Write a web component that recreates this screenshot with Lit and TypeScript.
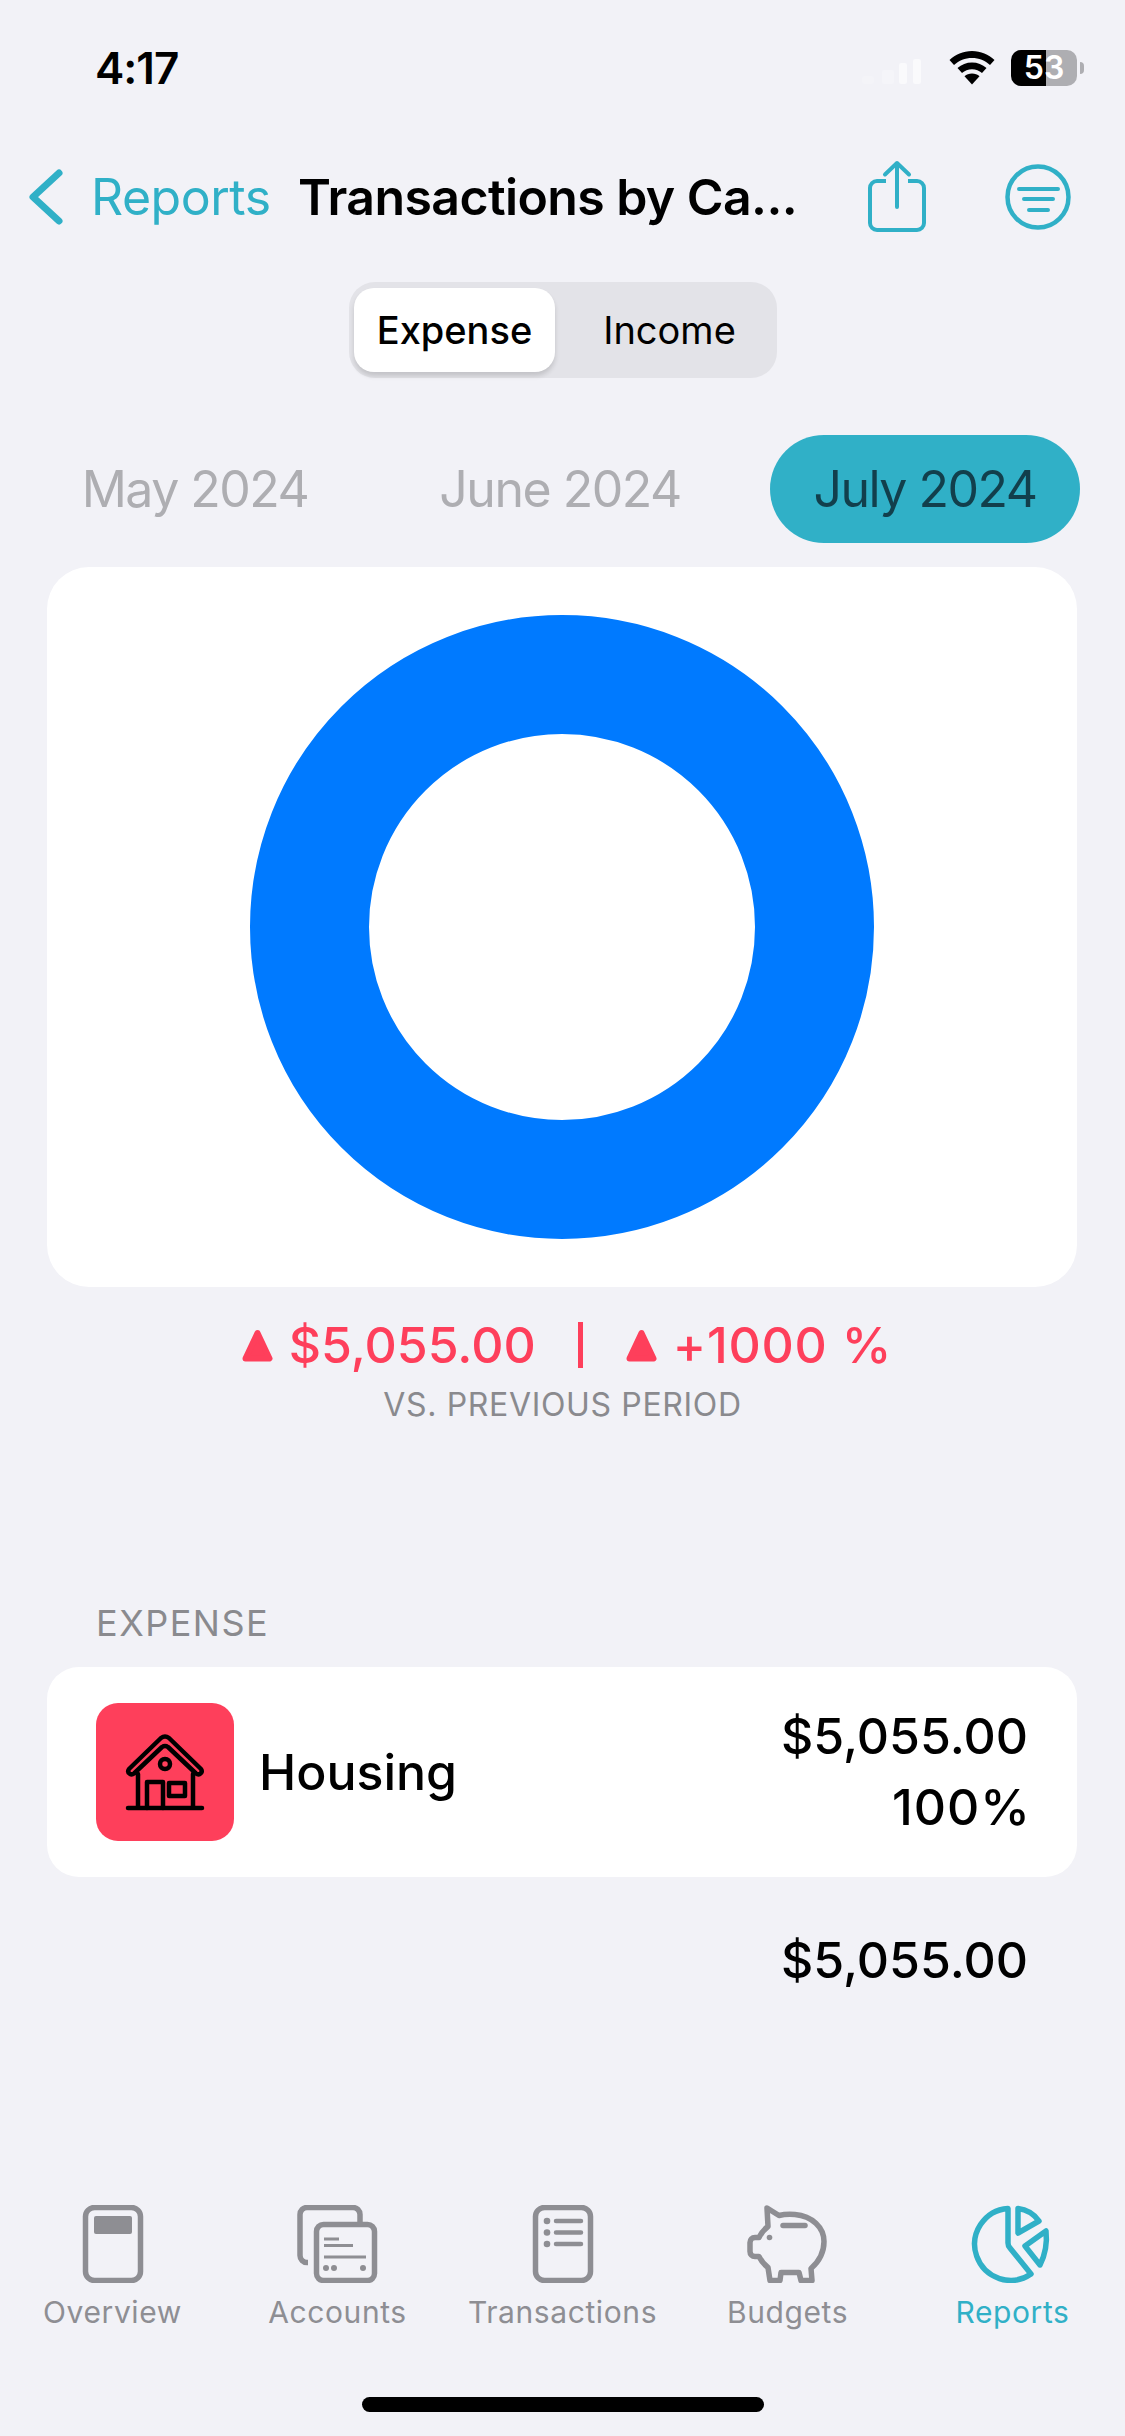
import { LitElement, html, css, svg } from "lit";
import { customElement } from "lit/decorators.js";

const tabs = [
  {
    label: "Overview",
    icon: svg`<rect x="22.500" y="2.500" width="55" height="73" rx="9" fill="none" stroke="currentColor" stroke-width="5.500"/>
      <rect x="31" y="11" width="38" height="18" rx="2" fill="currentColor"/>`,
  },
  {
    label: "Accounts",
    icon: svg`<path d="M20 57.500h-1a7 7 0 0 1-7-7V9.500a7 7 0 0 1 7-7h46a7 7 0 0 1 7 7v8" fill="none" stroke="currentColor" stroke-width="5.500"/>
      <rect x="28.500" y="19.500" width="58" height="56" rx="7" fill="none" stroke="currentColor" stroke-width="5.500"/>
      <path d="M36 34h15M36 40.500h29M36 52h42" stroke="currentColor" stroke-width="3" fill="none"/>
      <circle cx="38" cy="63" r="3" fill="currentColor"/><circle cx="46" cy="63" r="3" fill="currentColor"/><circle cx="75" cy="63" r="3" fill="currentColor"/>`,
  },
  {
    label: "Transactions",
    icon: svg`<rect x="22.500" y="2.500" width="55" height="73" rx="9" fill="none" stroke="currentColor" stroke-width="5.500"/>
      <circle cx="34" cy="16" r="3.300" fill="currentColor"/><circle cx="34" cy="27.500" r="3.300" fill="currentColor"/><circle cx="34" cy="39" r="3.300" fill="currentColor"/>
      <path d="M43 16h25M43 27.500h25M43 39h25" stroke="currentColor" stroke-width="4.500" stroke-linecap="round" fill="none"/>`,
  },
  {
    label: "Budgets",
    icon: svg`<path d="M29 3l12 7.500c4-1 10-1.500 16-1 17 1.500 29 13 29 27 0 11-5 20-13 27l1 12H63l-2-8H43l-1 8H32l-2-13c-4-3-7-7-9-11h-4c-3 0-5-2-5-5v-9c0-3 2-5 5-5h4c2-4 5-8 9-11z" fill="none" stroke="currentColor" stroke-width="5.500" stroke-linejoin="round"/>
      <path d="M45 20.500h22" stroke="currentColor" stroke-width="5.500" stroke-linecap="round"/>
      <circle cx="31.500" cy="32.500" r="2.800" fill="currentColor"/>`,
  },
  {
    label: "Reports",
    active: true,
    icon: svg`<path d="M45 3.400V38q0 3 2 5l21 26A36 36 0 1 1 45 3.400z" fill="none" stroke="currentColor" stroke-width="5.500" stroke-linejoin="round"/>
      <path d="M55 3.500Q68 5 76 16L55 28z" fill="none" stroke="currentColor" stroke-width="5.500" stroke-linejoin="round"/>
      <path d="M83 26q2 18-6 34L62 41z" fill="none" stroke="currentColor" stroke-width="5.500" stroke-linejoin="round"/>`,
  },
];

@customElement("app-root")
export class AppRoot extends LitElement {
  static styles = css`
    :host {
      display: flex;
      flex-direction: column;
      width: 1125px;
      height: 2436px;
      background: #f2f2f7;
      font-family: Inter, "Noto Sans", sans-serif;
      color: #000;
      overflow: hidden;
    }
    .status {
      height: 136px;
      flex: none;
      display: flex;
      align-items: center;
      justify-content: space-between;
      box-sizing: border-box;
      padding: 0 41px 0 95px;
    }
    .time {
      font-size: 44px;
      font-weight: 600;
      letter-spacing: -1px;
    }
    .status-right {
      display: flex;
      align-items: center;
    }
    .status-right svg {
      display: block;
    }
    .wifi {
      margin-left: -13px;
    }
    .battery {
      width: 66px;
      height: 36px;
      margin-left: 16px;
      border-radius: 10px;
      background: linear-gradient(90deg, #000 53%, #aeaeb2 53%);
      color: #fff;
      font-size: 32px;
      font-weight: 600;
      line-height: 36px;
      text-align: center;
    }
    .nub {
      width: 4px;
      height: 12px;
      margin-left: 3px;
      border-radius: 0 4px 4px 0;
      background: #aeaeb2;
    }
    .nav {
      height: 122px;
      flex: none;
      display: flex;
      align-items: center;
      box-sizing: border-box;
      padding-left: 26px;
    }
    .nav svg {
      display: block;
      flex: none;
    }
    .back {
      margin-left: 25px;
      width: 179px;
      font-size: 50px;
      color: #30b0c7;
      letter-spacing: -0.5px;
      white-space: nowrap;
    }
    .title {
      margin-left: 28px;
      width: 520px;
      font-size: 50px;
      font-weight: 600;
      letter-spacing: -0.6px;
      white-space: nowrap;
    }
    .share {
      margin-left: 49px;
    }
    .filter {
      margin-left: 78px;
    }
    .segment {
      flex: none;
      align-self: center;
      width: 428px;
      height: 96px;
      margin-top: 24px;
      margin-left: 1px;
      box-sizing: border-box;
      padding: 6px 5px;
      display: flex;
      background: #e3e3e8;
      border-radius: 26px;
      font-size: 38px;
    }
    .segment div {
      display: flex;
      align-items: center;
      justify-content: center;
    }
    .segment .on {
      width: 201px;
      background: #fff;
      border-radius: 20px;
      box-shadow: 0 4px 5px rgba(0, 0, 0, 0.14);
      font-weight: 500;
    }
    .segment .off {
      flex: 1;
      padding-left: 12px;
      font-weight: 400;
    }
    .months {
      flex: none;
      display: flex;
      gap: 55px;
      margin-top: 57px;
      padding-left: 40px;
    }
    .month {
      width: 310px;
      height: 108px;
      display: flex;
      align-items: center;
      justify-content: center;
      border-radius: 54px;
      font-size: 50px;
      color: #aeaeb2;
      letter-spacing: -1.5px;
    }
    .month.on {
      background: #30b0c7;
      color: #123f4c;
    }
    .chart {
      flex: none;
      width: 1030px;
      height: 720px;
      margin: 24px 0 0 47px;
      background: #fff;
      border-radius: 42px;
      display: flex;
      align-items: center;
      justify-content: center;
    }
    .chart svg {
      display: block;
    }
    .delta {
      flex: none;
      margin-top: 32px;
      height: 52px;
      padding-left: 8px;
      display: flex;
      align-items: center;
      justify-content: center;
      color: #fe3f5b;
      font-size: 50px;
      font-weight: 550;
      white-space: nowrap;
    }
    .delta svg {
      display: block;
      margin-right: 15px;
    }
    .sep {
      width: 5px;
      height: 46px;
      margin: 0 42px;
      background: #fe3f5b;
    }
    .pct {
      letter-spacing: 0.8px;
    }
    .vs {
      flex: none;
      margin-top: 14px;
      text-align: center;
      font-size: 32px;
      line-height: 40px;
      letter-spacing: 0.65px;
      color: #8a8a8e;
    }
    .section {
      flex: none;
      margin: 176px 0 0 96px;
      font-size: 36px;
      line-height: 44px;
      letter-spacing: 1.5px;
      color: #8a8a8e;
    }
    .row {
      flex: none;
      width: 1030px;
      height: 210px;
      margin: 22px 0 0 47px;
      box-sizing: border-box;
      padding: 0 49px;
      background: #fff;
      border-radius: 32px;
      display: flex;
      align-items: center;
    }
    .tile {
      width: 138px;
      height: 138px;
      border-radius: 22px;
      background: #fe3f5b;
      display: flex;
      align-items: center;
      justify-content: center;
      flex: none;
    }
    .name {
      margin-left: 25px;
      flex: 1;
      font-size: 50px;
      font-weight: 550;
    }
    .amounts {
      text-align: right;
      font-size: 50px;
      font-weight: 550;
      line-height: 71px;
    }
    .share-pct {
      letter-spacing: 1px;
      margin-right: -3px;
    }
    .total {
      flex: none;
      margin: 48px 97px 0 0;
      text-align: right;
      font-size: 50px;
      font-weight: 550;
      line-height: 70px;
    }
    .tabs {
      flex: none;
      margin-top: auto;
      display: grid;
      grid-template-columns: repeat(5, 225px);
    }
    .tab {
      display: flex;
      flex-direction: column;
      align-items: center;
      color: #8e8e93;
      font-size: 30px;
      letter-spacing: 0.6px;
      line-height: 40px;
    }
    .tab.on {
      color: #30b0c7;
    }
    .tab svg {
      display: block;
      margin-bottom: 9px;
    }
    .home {
      flex: none;
      align-self: center;
      width: 402px;
      height: 15px;
      margin: 65px 0 24px;
      border-radius: 8px;
      background: #000;
    }
  `;

  triangle() {
    return html`<svg width="33" height="33" viewBox="0 0 33 33">
      <path d="M16.500 4L28.500 29.500H4.500z" fill="currentColor" stroke="currentColor" stroke-width="6" stroke-linejoin="round"/>
    </svg>`;
  }

  render() {
    return html`
      <div class="status">
        <div class="time">4:17</div>
        <div class="status-right">
          <svg width="100" height="36" viewBox="0 0 100 36">
            <rect x="0" y="26" width="12" height="8" rx="2" fill="#f4f4f8"/>
            <rect x="20" y="20" width="12" height="14" rx="2" fill="#f5f5f9"/>
            <rect x="37" y="13" width="8" height="21" rx="2" fill="#fafafc"/>
            <rect x="51" y="9" width="8" height="25" rx="2" fill="#fafafc"/>
          </svg>
          <svg class="wifi" width="46" height="34" viewBox="0 0 46 34">
            <path d="M23 0C14 0 6.500 3.500 0.500 9l4.500 5C10 9.500 16 7 23 7s13 2.500 18 7l4.500-5C39.500 3.500 32 0 23 0z" fill="#000"/>
            <path d="M23 11.500c-5.500 0-10.500 2-14.500 5.500l4.500 5c2.700-2.300 6.200-3.700 10-3.700s7.300 1.400 10 3.700l4.500-5c-4-3.500-9-5.500-14.500-5.500z" fill="#000"/>
            <path d="M23 22.500c-3 0-5.500 1-7.500 2.800L23 33.500l7.500-8.200c-2-1.800-4.500-2.800-7.500-2.800z" fill="#000"/>
          </svg>
          <div class="battery">53</div>
          <div class="nub"></div>
        </div>
      </div>

      <div class="nav">
        <svg width="40" height="62" viewBox="0 0 40 62">
          <path d="M33 7L7 31l26 24" fill="none" stroke="#30b0c7" stroke-width="7" stroke-linecap="round" stroke-linejoin="round"/>
        </svg>
        <div class="back">Reports</div>
        <div class="title">Transactions by Ca...</div>
        <svg class="share" width="60" height="74" viewBox="0 0 60 74">
          <path d="M19 21H10a7 7 0 0 0-7 7v35a7 7 0 0 0 7 7h40a7 7 0 0 0 7-7V28a7 7 0 0 0-7-7h-9" fill="none" stroke="#30b0c7" stroke-width="4"/>
          <path d="M30 47V3M18 14.500L30 3l12 11.500" fill="none" stroke="#30b0c7" stroke-width="4" stroke-linecap="round" stroke-linejoin="round"/>
        </svg>
        <svg class="filter" width="66" height="66" viewBox="0 0 66 66">
          <circle cx="33" cy="33" r="30.500" fill="none" stroke="#30b0c7" stroke-width="4.500"/>
          <path d="M14 25h39M19 35h29M24 46h19" fill="none" stroke="#30b0c7" stroke-width="4" stroke-linecap="round"/>
        </svg>
      </div>

      <div class="segment">
        <div class="on">Expense</div>
        <div class="off">Income</div>
      </div>

      <div class="months">
        <div class="month">May 2024</div>
        <div class="month">June 2024</div>
        <div class="month on">July 2024</div>
      </div>

      <div class="chart">
        <svg width="626" height="626" viewBox="0 0 626 626">
          <circle cx="313" cy="313" r="252.500" fill="none" stroke="#007aff" stroke-width="119"/>
        </svg>
      </div>

      <div class="delta">
        ${this.triangle()}<span>$5,055.00</span><span class="sep"></span>${this.triangle()}<span class="pct">+1000 %</span>
      </div>
      <div class="vs">VS. PREVIOUS PERIOD</div>

      <div class="section">EXPENSE</div>
      <div class="row">
        <div class="tile">
          <svg width="80" height="80" viewBox="0 0 80 80" fill="none" stroke="#000" stroke-width="4.500" stroke-linecap="round" stroke-linejoin="round">
            <path d="M4 37L36 6q4-3 8 0l32 31q2 3-1 5-2 1-4-.5L43 15q-3-2-6 0L9 41.500q-2 1.500-4 .5-3-2-1-5z"/>
            <path d="M13 42v34M68 42v34M3 76h74"/>
            <circle cx="40" cy="32" r="5"/>
            <path d="M22 76V50h16v26M44 51h16v13H44z"/>
          </svg>
        </div>
        <div class="name">Housing</div>
        <div class="amounts">$5,055.00<div class="share-pct">100%</div></div>
      </div>
      <div class="total">$5,055.00</div>

      <div class="tabs">
        ${tabs.map(
          (t) => html`<div class="tab ${t.active ? "on" : ""}">
            <svg width="100" height="78" viewBox="0 0 100 78">${t.icon}</svg>
            <span>${t.label}</span>
          </div>`
        )}
      </div>
      <div class="home"></div>
    `;
  }
}
